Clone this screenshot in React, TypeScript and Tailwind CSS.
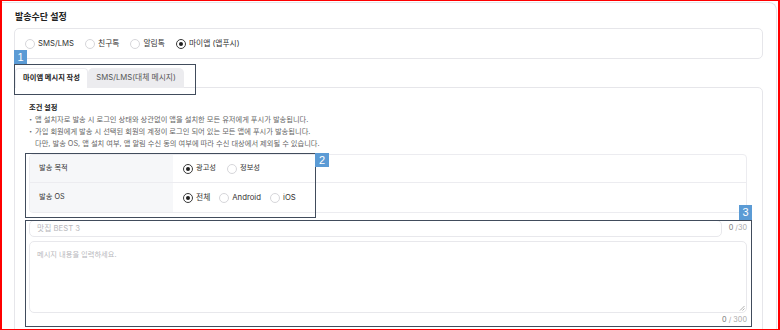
import React from 'react';

interface RadioProps {
  label: string;
  checked?: boolean;
}

const Radio: React.FC<RadioProps> = ({ label, checked = false }) => (
  <label className="flex items-center gap-[3px]">
    <span
      className={`w-[10px] h-[10px] rounded-full border flex items-center justify-center bg-white ${
        checked ? 'border-[#3a3a3a]' : 'border-[#d6d6da]'
      }`}
    >
      {checked && <span className="w-[4px] h-[4px] rounded-full bg-[#1f1f1f]" />}
    </span>
    <span className="text-[#333]">{label}</span>
  </label>
);

const Badge: React.FC<{ n: string; className: string }> = ({ n, className }) => (
  <div
    className={`absolute bg-[#5b9bd5] text-white text-[11px] leading-none flex items-center justify-center font-['Liberation_Sans',sans-serif] ${className}`}
  >
    {n}
  </div>
);

const App: React.FC = () => {
  return (
    <div className="relative w-[780px] h-[330px] overflow-hidden bg-white font-[Inter,'Noto_Sans_CJK_KR',sans-serif] text-[7.25px] text-[#333]">
      {/* page card */}
      <div className="ml-[2px] mr-[3px] mt-[2px] h-[328px] border-t border-r border-[#e6e6ea] rounded-tr-[8px] pl-[12px] pr-[13px] pt-[8px]">
        <h1 className="h-[12px] text-[9px] leading-[12px] font-bold text-[#222] pl-[1px]">발송수단 설정</h1>

        {/* channel radios */}
        <div className="mt-[5px] h-[31px] border border-[#e6e6ea] rounded-[5px] flex items-center gap-[11px] pl-[10px] text-[7.75px]">
          <Radio label="SMS/LMS" />
          <Radio label="친구톡" />
          <Radio label="알림톡" />
          <Radio label="마이앱 (앱푸시)" checked />
        </div>

        {/* tabs */}
        <div className="mt-[9px] flex relative z-10 -mb-px pl-px">
          <div className="h-[20px] w-[73px] bg-white border-x border-t border-[#ececf0] rounded-t-[4px] flex items-center justify-center font-bold text-[#222]">
            마이앱 메시지 작성
          </div>
          <div className="h-[20px] w-[96px] bg-[#ececef] rounded-t-[5px] flex items-center justify-center text-[#555] text-[7.75px]">
            SMS/LMS(대체 메시지)
          </div>
        </div>

        {/* tab panel */}
        <div className="h-[260px] border border-[#e6e6ea] rounded-tr-[5px] pl-[14px] pr-[15px] pt-[15px]">
          <div className="font-bold text-[#222] leading-[10px]">조건 설정</div>
          <ul className="mt-[1px] -ml-[2px] text-[#666] leading-[12px]">
            <li className="flex">
              <span className="w-[8px]">・</span>
              <span>앱 설치자로 발송 시 로그인 상태와 상관없이 앱을 설치한 모든 유저에게 푸시가 발송됩니다.</span>
            </li>
            <li className="flex">
              <span className="w-[8px]">・</span>
              <span>
                가입 회원에게 발송 시 선택된 회원의 계정이 로그인 되어 있는 모든 앱에 푸시가 발송됩니다.
                <br />
                다만, 발송 OS, 앱 설치 여부, 앱 알림 수신 동의 여부에 따라 수신 대상에서 제외될 수 있습니다.
              </span>
            </li>
          </ul>

          {/* condition table */}
          <div className="mt-[4px] border border-[#ececf0] rounded-[4px] overflow-hidden">
            <div className="flex h-[28px] border-b border-[#ececf0]">
              <div className="w-[143px] bg-[#f6f7f9] flex items-center pl-[9px] text-[#333]">발송 목적</div>
              <div className="flex-1 flex items-center gap-[11px] pl-[10px]">
                <Radio label="광고성" checked />
                <Radio label="정보성" />
              </div>
            </div>
            <div className="flex h-[29px]">
              <div className="w-[143px] bg-[#f6f7f9] flex items-center pl-[9px] text-[#333]">발송 OS</div>
              <div className="flex-1 flex items-center gap-[9px] pl-[10px] text-[7.75px]">
                <Radio label="전체" checked />
                <Radio label="Android" />
                <Radio label="iOS" />
              </div>
            </div>
          </div>

          {/* title input */}
          <div className="mt-[7px] flex items-center gap-[4px]">
            <div className="flex-1 h-[17px] border border-[#e8e8ec] rounded-[5px] flex items-center pl-[7px] text-[#b8b8bc] text-[7.75px]">
              맛집 BEST 3
            </div>
            <div className="w-[21px] text-right text-[#aaa]">
              <span className="text-[#777]">0</span> /30
            </div>
          </div>

          {/* message textarea */}
          <div className="relative mt-[4px] h-[72px] border border-[#e8e8ec] rounded-[5px] pl-[7px] pt-[8px] text-[#b8b8bc]">
            메시지 내용을 입력하세요.
            <svg className="absolute right-[1px] bottom-[1px]" width="6" height="6" viewBox="0 0 6 6">
              <path d="M1 5.5 L5.5 1 M3.5 5.5 L5.5 3.5" stroke="#9a9a9a" strokeWidth="0.8" />
            </svg>
          </div>
          <div className="mt-[2px] text-right text-[#aaa] leading-[10px]">
            <span className="text-[#777]">0</span> / 300
          </div>
        </div>
      </div>

      {/* annotation overlays */}
      <div className="absolute left-[14px] top-[64px] w-[182px] h-[31px] border-[1.5px] border-[#414c5c] pointer-events-none" />
      <Badge n="1" className="left-[14px] top-[50px] w-[13px] h-[14px]" />

      <div className="absolute left-[25px] top-[153px] w-[291px] h-[65px] border-[1.5px] border-[#414c5c] pointer-events-none" />
      <Badge n="2" className="left-[315px] top-[153px] w-[14px] h-[14px]" />

      <div className="absolute left-[25px] top-[220px] w-[727px] h-[107px] border-[1.5px] border-[#414c5c] pointer-events-none" />
      <Badge n="3" className="left-[739px] top-[205px] w-[13px] h-[15px]" />

      {/* red frame */}
      <div className="absolute inset-0 border-x-2 border-y border-[#ff0000] pointer-events-none" />
    </div>
  );
};

export default App;
